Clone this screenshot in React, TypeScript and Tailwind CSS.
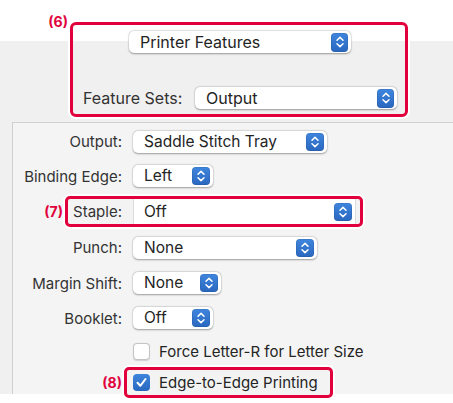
import React from "react";

const RED = "border-[#e1003c]";

function Stepper({ big = false }: { big?: boolean }) {
  return (
    <div
      className={`flex items-center justify-center rounded-[4px] bg-[linear-gradient(to_bottom,#3f86de,#2a67bf)] shadow-[inset_0_0_0_0.5px_rgba(0,0,0,0.15)] ${
        big ? "w-[17px] h-[19px]" : "w-[18px] h-[18px]"
      }`}
    >
      <svg width="10" height="14" viewBox="0 0 10 14" fill="none">
        <path d="M2 5.2 L5 2.4 L8 5.2" stroke="white" strokeWidth="1.5" strokeLinecap="round" strokeLinejoin="round" />
        <path d="M2 8.8 L5 11.6 L8 8.8" stroke="white" strokeWidth="1.5" strokeLinecap="round" strokeLinejoin="round" />
      </svg>
    </div>
  );
}

function Popup({ value, width, big = false }: { value: string; width: string; big?: boolean }) {
  return (
    <div
      className={`flex items-center justify-between h-[22px] rounded-[5px] bg-white pl-[11px] pr-[3px] shadow-[0_0.5px_2px_rgba(0,0,0,0.35),0_0_0_0.5px_rgba(0,0,0,0.06)] ${width}`}
    >
      <span className={`${big ? "text-[16px]" : "text-[15.5px]"} text-[#242424] leading-none`}>{value}</span>
      <Stepper big={big} />
    </div>
  );
}

function Row({
  label,
  h,
  children,
}: {
  label: string;
  h: string;
  children: React.ReactNode;
}) {
  return (
    <div className={`flex items-center shrink-0 ${h}`}>
      <div className="w-[109px] text-right text-[15px] text-[#333] leading-none">{label}</div>
      <div className="ml-[11px]">{children}</div>
    </div>
  );
}

function Tag({ text, pos }: { text: string; pos: string }) {
  return (
    <span
      className={`absolute right-full mr-[5px] text-[14px] font-bold text-[#e1003c] leading-[14px] whitespace-nowrap ${pos}`}
    >
      {text}
    </span>
  );
}

export default function App() {
  return (
    <div
      className="w-[453px] h-[403px] bg-white overflow-hidden"
      style={{ fontFamily: "Inter, 'Noto Sans', sans-serif" }}
    >
      <div className="h-[394px] flex flex-col pt-[22px] bg-[linear-gradient(to_bottom,#ffffff_41px,#f0f0f0_41px)]">
        {/* (6) box */}
        <div
          className={`relative shrink-0 ml-[70px] w-[338px] h-[95px] border-[3px] ${RED} rounded-[6px] shadow-[0_0_0_2px_#ffffff] flex flex-col`}
        >
          <Tag text="(6)" pos="top-[-10px]" />
          <div className="ml-[56px] mt-[6px]">
            <Popup value="Printer Features" width="w-[222px]" big />
          </div>
          <div className="mt-auto mb-[5px] flex items-center pl-[10px]">
            <div className="w-[112px] text-[16px] text-[#333] leading-none">Feature Sets:</div>
            <Popup value="Output" width="w-[202px]" big />
          </div>
        </div>

        {/* panel */}
        <div className="ml-[12px] mt-[5px] flex-1 min-h-0 border-t border-l border-[#d0d0d0] bg-[#f4f4f4] flex flex-col">
          <Row label="Output:" h="h-[35px] mt-[1px]">
            <Popup value="Saddle Stitch Tray" width="w-[194px]" />
          </Row>
          <Row label="Binding Edge:" h="h-[34px]">
            <Popup value="Left" width="w-[80px]" />
          </Row>
          <div className="h-[37px] shrink-0 flex items-center">
            <div
              className={`relative ml-[52px] w-[298px] h-[31px] border-[3px] ${RED} rounded-[5px] shadow-[0_0_0_2px_#ffffff] bg-[#f3f3f3] flex items-stretch`}
            >
              <Tag text="(7)" pos="top-1/2 -translate-y-1/2" />
              <div className="w-[54px] flex items-center justify-end text-[15px] text-[#333] leading-none">
                Staple:
              </div>
              <div className="ml-[11px] w-[223px] bg-white border-l border-r border-[#dcdcdc] flex items-center justify-between pl-[10px] pr-[3px]">
                <span className="text-[15.5px] text-[#242424] leading-none">Off</span>
                <Stepper />
              </div>
            </div>
          </div>
          <Row label="Punch:" h="h-[35px]">
            <Popup value="None" width="w-[184px]" />
          </Row>
          <Row label="Margin Shift:" h="h-[36px]">
            <Popup value="None" width="w-[88px]" />
          </Row>
          <Row label="Booklet:" h="h-[34px]">
            <Popup value="Off" width="w-[80px]" />
          </Row>
          <div className="h-[32px] shrink-0 flex items-center pl-[120px]">
            <div className="w-[17px] h-[17px] rounded-[4px] bg-white border border-[#c4c4c4] shadow-[0_0.5px_1px_rgba(0,0,0,0.15)]" />
            <span className="ml-[9px] text-[15px] text-[#242424] leading-none">Force Letter-R for Letter Size</span>
          </div>
          <div className="h-[31px] shrink-0 flex items-center">
            <div
              className={`relative ml-[111px] w-[209px] h-[31px] border-[3px] ${RED} rounded-[5px] shadow-[0_0_0_2px_#ffffff] bg-[#f3f3f3] flex items-center pl-[6px]`}
            >
              <Tag text="(8)" pos="top-1/2 -translate-y-1/2" />
              <div className="w-[17px] h-[17px] rounded-[4px] bg-[linear-gradient(to_bottom,#3d84dc,#2a67bf)] flex items-center justify-center">
                <svg width="13" height="13" viewBox="0 0 13 13" fill="none">
                  <path d="M2.5 6.8 L5.3 9.8 L10.5 3" stroke="white" strokeWidth="2" strokeLinecap="round" strokeLinejoin="round" />
                </svg>
              </div>
              <span className="ml-[9px] text-[15px] text-[#242424] leading-none">Edge-to-Edge Printing</span>
            </div>
          </div>
        </div>
      </div>
    </div>
  );
}
